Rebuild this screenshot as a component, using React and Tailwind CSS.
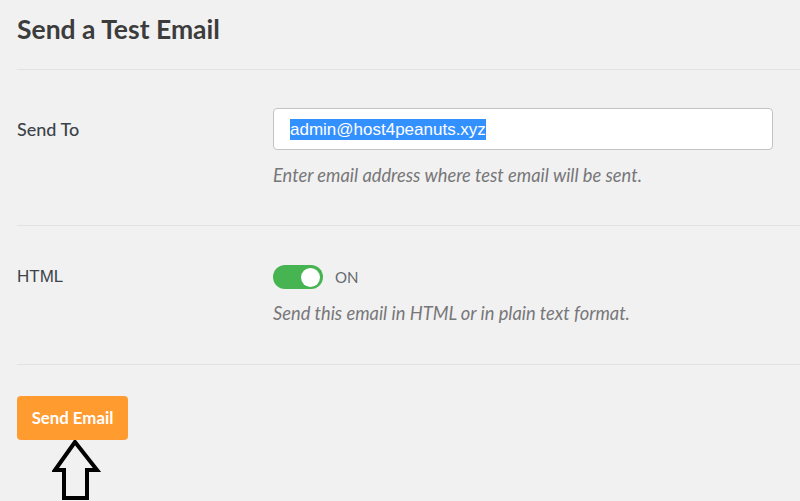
import React from 'react';

const App = () => {
  return (
    <div className="w-[800px] h-[501px] overflow-hidden bg-[#f1f1f1] pl-[17px] font-['Lato','Noto_Sans',sans-serif]">
      {/* Title */}
      <div className="pt-[13px] pb-[24px] border-b border-[#e2e2e2]">
        <h1 className="text-[26.5px] leading-[32px] font-bold text-[#3c3c3c]">Send a Test Email</h1>
      </div>

      {/* Send To row */}
      <div className="flex pt-[38px] pb-[38px] border-b border-[#e2e2e2]">
        <div className="w-[256px] h-[42px] flex items-center text-[18px] font-medium text-[#3c434a]">Send To</div>
        <div>
          <div className="w-[500px] h-[42px] bg-white border border-[#c3c3c3] rounded-[4px] flex items-center pl-[16px]">
            <span className="bg-[#3390ff] text-white text-[17px] leading-[21px] font-['Liberation_Sans',Arial,sans-serif]">
              admin@host4peanuts.xyz
            </span>
          </div>
          <p className="mt-[13px] text-[18.3px] leading-[24px] italic text-[#777779]">
            Enter email address where test email will be sent.
          </p>
        </div>
      </div>

      {/* HTML row */}
      <div className="flex pt-[39px] pb-[39px] border-b border-[#e2e2e2]">
        <div className="w-[256px] h-[24px] flex items-center text-[17px] text-[#3c434a] font-['Liberation_Sans',Arial,sans-serif]">HTML</div>
        <div>
          <div className="flex items-center gap-[12px]">
            <div className="w-[50px] h-[24px] rounded-full bg-[#46b450] flex items-center justify-end pr-[3px]">
              <div className="w-[19px] h-[19px] rounded-full bg-white"></div>
            </div>
            <span className="text-[15px] text-[#646970]">ON</span>
          </div>
          <p className="mt-[12px] text-[18.3px] leading-[24px] italic text-[#777779]">
            Send this email in HTML or in plain text format.
          </p>
        </div>
      </div>

      {/* Button */}
      <div className="pt-[31px]">
        <button className="w-[111px] h-[44px] rounded-[4px] bg-[#ff9b2f] text-white text-[16.8px] font-bold">
          Send Email
        </button>
        <svg width="50" height="62" viewBox="0 0 50 62" className="ml-[35px]">
          <polygon
            points="23,2 3,30 12,30 12,58 35,58 35,30 45,30"
            fill="none"
            stroke="#000"
            strokeWidth="4"
            strokeLinejoin="miter"
          />
        </svg>
      </div>
    </div>
  );
};

export default App;
